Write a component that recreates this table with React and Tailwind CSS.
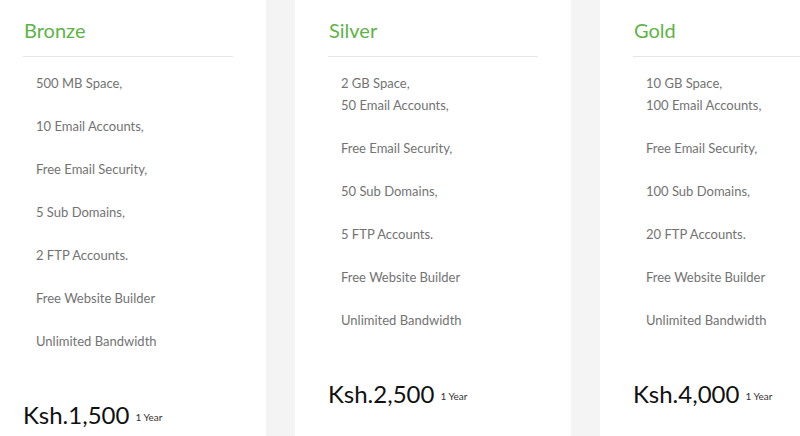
const plans = [
	{
		name: 'Bronze',
		features: [
			['500 MB Space,'],
			['10 Email Accounts,'],
			['Free Email Security,'],
			['5 Sub Domains,'],
			['2 FTP Accounts.'],
			['Free Website Builder'],
			['Unlimited Bandwidth']
		],
		price: 'Ksh.1,500'
	},
	{
		name: 'Silver',
		features: [
			['2 GB Space,', '50 Email Accounts,'],
			['Free Email Security,'],
			['50 Sub Domains,'],
			['5 FTP Accounts.'],
			['Free Website Builder'],
			['Unlimited Bandwidth']
		],
		price: 'Ksh.2,500'
	},
	{
		name: 'Gold',
		features: [
			['10 GB Space,', '100 Email Accounts,'],
			['Free Email Security,'],
			['100 Sub Domains,'],
			['20 FTP Accounts.'],
			['Free Website Builder'],
			['Unlimited Bandwidth']
		],
		price: 'Ksh.4,000'
	}
]

const PlanCard = ({ plan }) => {
	return (
		<div className="w-[276px] shrink-0 bg-white px-[33px] pt-4">
			<h2 className="text-[20px] leading-[28px] text-[#5db446] pb-3 border-b border-[#e6e6e6] pl-[1px]">
				{plan.name}
			</h2>
			<div className="mt-[15px] pl-[13px]">
				{plan.features.map((lines, i) => (
					<p key={i} className="text-[13px] leading-[22px] text-[#737373] mb-[21px]">
						{lines.map((line, j) => (
							<span key={j} className="block">
								{line}
							</span>
						))}
					</p>
				))}
			</div>
			<div className="mt-[48px] flex items-baseline gap-[6px]">
				<span className="text-[24px] leading-[30px] text-[#111]">{plan.price}</span>
				<span className="text-[10px] text-[#333] relative -top-[3px]">1 Year</span>
			</div>
		</div>
	)
}

export default function App() {
	return (
		<div className="h-[436px] w-[800px] overflow-hidden bg-[#f4f4f4] font-['Lato',sans-serif]">
			<div className="flex gap-[29px] ml-[-10px] h-full">
				{plans.map((plan) => (
					<PlanCard key={plan.name} plan={plan} />
				))}
			</div>
		</div>
	)
}
